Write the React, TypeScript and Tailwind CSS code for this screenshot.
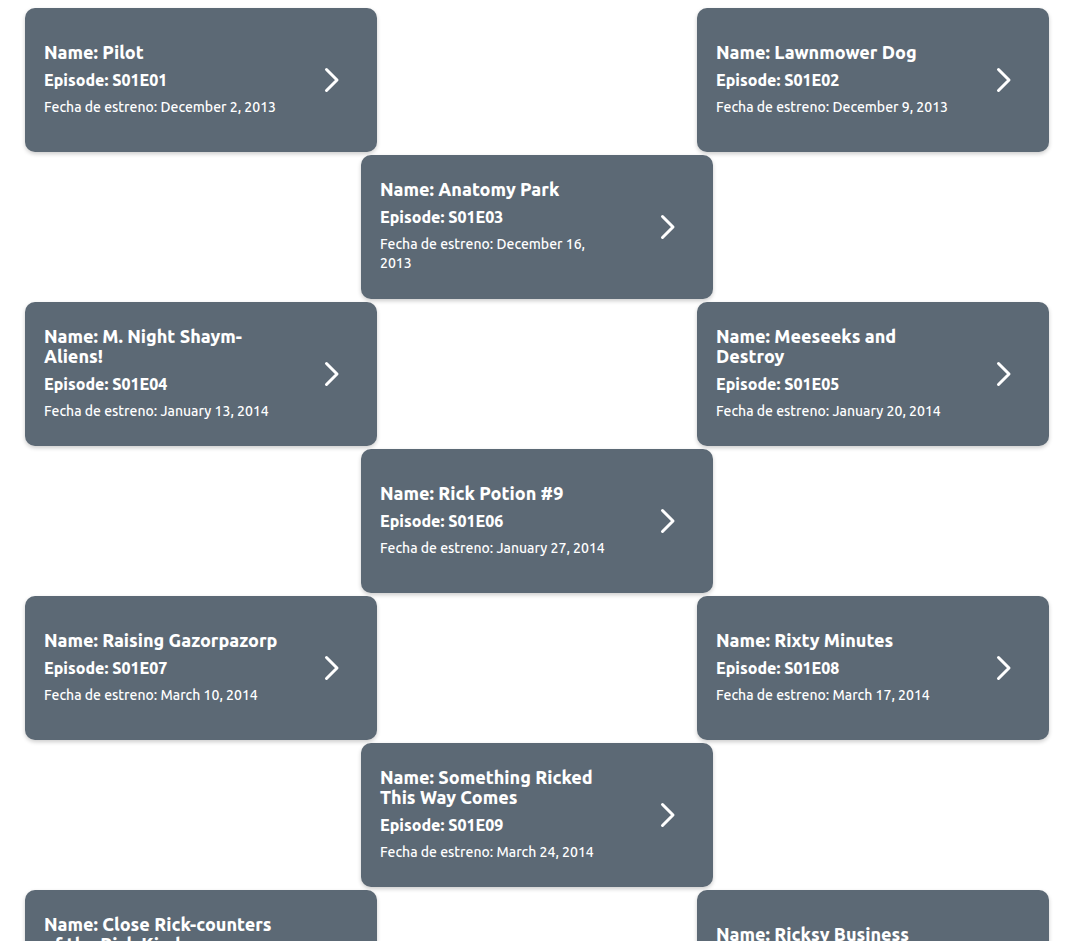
type Episode = { name: string; code: string; airDate: string };

const rows: Episode[][] = [
  [
    { name: "Pilot", code: "S01E01", airDate: "December 2, 2013" },
    { name: "Lawnmower Dog", code: "S01E02", airDate: "December 9, 2013" },
  ],
  [{ name: "Anatomy Park", code: "S01E03", airDate: "December 16, 2013" }],
  [
    { name: "M. Night Shaym-Aliens!", code: "S01E04", airDate: "January 13, 2014" },
    { name: "Meeseeks and Destroy", code: "S01E05", airDate: "January 20, 2014" },
  ],
  [{ name: "Rick Potion #9", code: "S01E06", airDate: "January 27, 2014" }],
  [
    { name: "Raising Gazorpazorp", code: "S01E07", airDate: "March 10, 2014" },
    { name: "Rixty Minutes", code: "S01E08", airDate: "March 17, 2014" },
  ],
  [{ name: "Something Ricked This Way Comes", code: "S01E09", airDate: "March 24, 2014" }],
  [
    { name: "Close Rick-counters of the Rick Kind", code: "S01E10", airDate: "April 7, 2014" },
    { name: "Ricksy Business", code: "S01E11", airDate: "April 14, 2014" },
  ],
];

function EpisodeCard({ name, code, airDate }: Episode) {
  return (
    <article className="flex h-36 w-[352px] shrink-0 items-center justify-between rounded-[10px] bg-[#5c6975] pr-[37px] pl-[19px] text-white shadow-[0_2px_4px_rgba(0,0,0,0.2)]">
      <div className="flex w-[238px] flex-col gap-2 pb-[2px]">
        <h2 className="text-[18px] leading-[20px] font-black">Name: {name}</h2>
        <h3 className="text-[16px] leading-[20px] font-black">Episode: {code}</h3>
        <p className="text-[14px] leading-[19px] font-medium">Fecha de estreno: {airDate}</p>
      </div>
      <button type="button" aria-label={`Ver ${name}`} className="cursor-pointer">
        <svg width="18" height="28" viewBox="0 0 18 28" fill="none" stroke="currentColor" strokeWidth="3" strokeLinecap="round" strokeLinejoin="round">
          <path d="M4.5 3.5 15 14 4.5 24.5" />
        </svg>
      </button>
    </article>
  );
}

export default function App() {
  return (
    <main className="flex h-screen flex-col gap-[3px] overflow-hidden bg-white pt-2 pr-5 pl-[25px] font-['Ubuntu','Noto_Sans',sans-serif]">
      {rows.map((row) => (
        <section key={row[0].code} className={row.length > 1 ? "flex justify-between" : "flex justify-center"}>
          {row.map((episode) => (
            <EpisodeCard key={episode.code} {...episode} />
          ))}
        </section>
      ))}
    </main>
  );
}
